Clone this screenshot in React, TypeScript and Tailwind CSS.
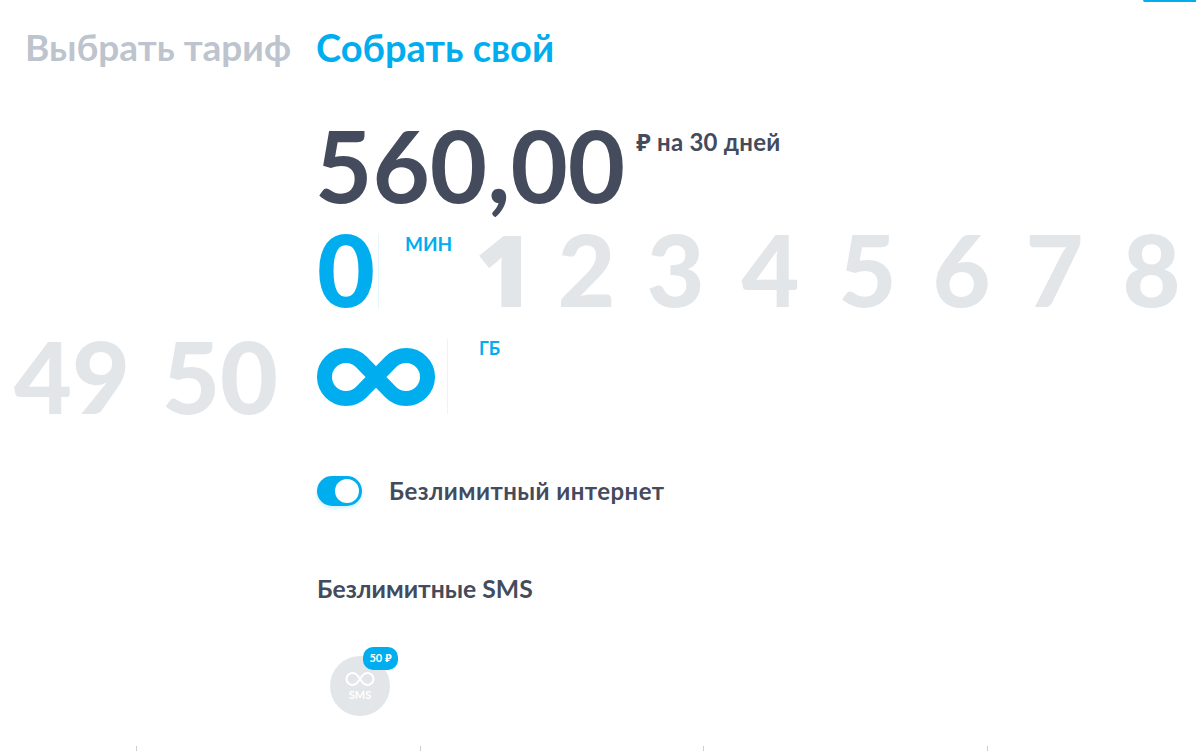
const digits = [
  { d: 2, cls: "ml-[24px]" },
  { d: 3, cls: "ml-[31px]" },
  { d: 4, cls: "ml-[37px]" },
  { d: 5, cls: "ml-[39px]" },
  { d: 6, cls: "ml-[36px]" },
  { d: 7, cls: "ml-[35px]" },
  { d: 8, cls: "ml-[39px]" },
];
const ticks = [
  { id: "a", cls: "ml-[136px]" },
  { id: "b", cls: "ml-[283px]" },
  { id: "c", cls: "ml-[282px]" },
  { id: "d", cls: "ml-[283px]" },
];

function Infinity8({ className, width }: { className: string; width: number }) {
  return (
    <svg className={className} width={width} height={58} viewBox="0 0 118 58" fill="none" aria-hidden="true">
      <path
        d="M59 29 L44.200 13.800 A21.500 21.500 0 1 0 44.200 44.200 L59 29 L73.800 13.800 A21.500 21.500 0 1 1 73.800 44.200 Z"
        stroke="currentColor"
        strokeWidth="15"
      />
    </svg>
  );
}

export default function App() {
  return (
    <div className="relative h-[751px] w-[1196px] overflow-hidden bg-white font-['Lato','Noto_Sans',sans-serif] text-[#434b5c]">
      <div className="absolute right-0 top-0 h-[2px] w-[53px] rounded-bl-full bg-[#00aeef]" />

      <div className="flex pl-[25px] pt-[25px] font-bold leading-[44px]">
        <span className="w-[291px] text-[37px] text-[#bdc4cd]">Выбрать тариф</span>
        <span className="text-[38px] text-[#00aeef]">Собрать свой</span>
      </div>

      <div className="ml-[315px] mt-[41px] flex h-[117px] items-start">
        <span className="text-[99px] font-bold leading-[110px]">560,00</span>
        <span className="ml-[11px] mt-[18px] text-[24px] font-bold leading-[28px] tracking-[0.25px]">₽ на 30 дней</span>
      </div>

      <div className="flex h-[80px] pl-[317px] text-[100px] font-black leading-[82px]">
        <span className="w-[61px] text-[#00aeef]">0</span>
        <div className="mt-[7px] h-[75px] w-px bg-[#e5f6fd]" />
        <span className="ml-[26px] mt-[5px] h-[24px] w-[70px] text-[19px] font-bold leading-[24px] text-[#00aeef]">МИН</span>
        <div className="flex text-[#e3e6e9]">
          <span className="font-['Open_Sans',sans-serif] font-extrabold">1</span>
          {digits.map((x) => (
            <span key={x.d} className={x.cls}>{x.d}</span>
          ))}
        </div>
      </div>

      <div className="mt-[27px] flex h-[80px]">
        <div className="flex w-[317px] justify-end gap-[32px] pr-[39px] text-[100px] font-black leading-[82px] text-[#e3e6e9]">
          <span>49</span>
          <span>50</span>
        </div>
        <Infinity8 className="mt-[14px] text-[#00aeef]" width={118} />
        <div className="ml-[12px] mt-[5px] h-[75px] w-px bg-[#e5f6fd]" />
        <span className="ml-[31px] mt-[2px] h-[24px] text-[18px] font-bold leading-[24px] text-[#00aeef]">ГБ</span>
      </div>

      <div className="ml-[317px] mt-[62px] flex items-center gap-[27px]">
        <div className="flex h-[30px] w-[45px] items-center justify-end rounded-full bg-[#00aeef] pr-[3px] shadow-[0_2px_4px_rgba(0,174,239,0.2)]">
          <div className="h-[24px] w-[24px] rounded-full bg-white" />
        </div>
        <span className="text-[24px] font-bold leading-[30px] tracking-[0.45px]">Безлимитный интернет</span>
      </div>

      <div className="ml-[317px] mt-[68px] text-[24.7px] font-bold leading-[30px]">Безлимитные SMS</div>

      <div className="relative ml-[330px] mt-[52px] flex h-[60px] w-[60px] flex-col items-center justify-center rounded-full bg-[#e3e6e9] text-white">
        <svg width="30" height="16" viewBox="0 0 30 16" fill="none" aria-hidden="true">
          <path
            d="M15 8 L11.740 3.760 A6 6 0 1 0 11.740 12.240 L15 8 L18.260 3.760 A6 6 0 1 1 18.260 12.240 Z"
            stroke="currentColor"
            strokeWidth="2"
          />
        </svg>
        <span className="mt-[2px] text-[11px] font-bold leading-[12px]">SMS</span>
        <span className="absolute left-[33px] top-[-9px] flex h-[23px] w-[35px] items-center justify-center rounded-[10px] bg-[#00aeef] text-[11px] font-bold">
          50 ₽
        </span>
      </div>

      <div className="absolute bottom-0 left-0 flex">
        {ticks.map((t) => (
          <div key={t.id} className={`h-[5px] w-px bg-[#cfcfcf] ${t.cls}`} />
        ))}
      </div>
    </div>
  );
}
